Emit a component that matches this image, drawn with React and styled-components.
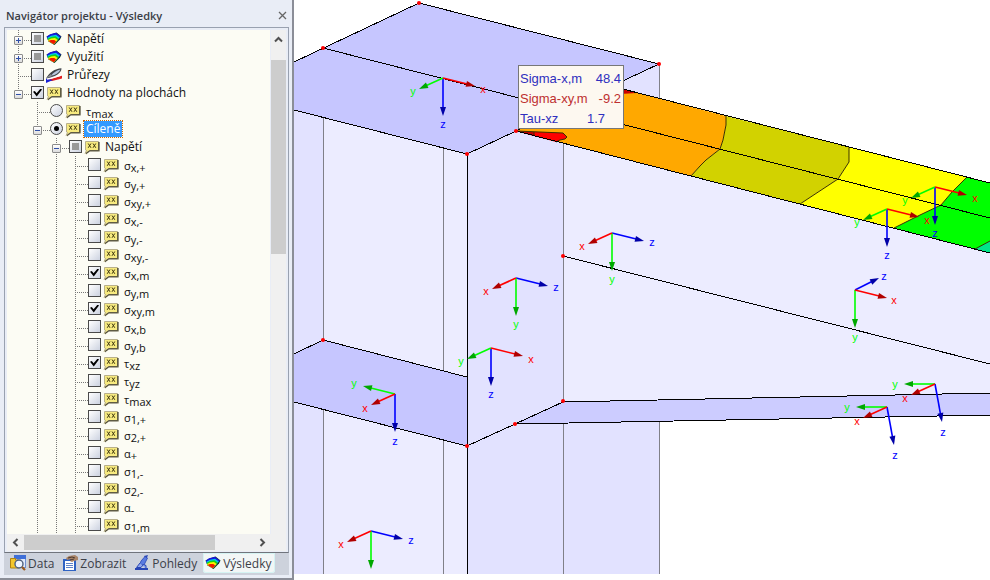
import React, { useState } from "react";
import styled, { createGlobalStyle } from "styled-components";

const STRESSES = [
  ["σ", "x,+"],
  ["σ", "y,+"],
  ["σ", "xy,+"],
  ["σ", "x,-"],
  ["σ", "y,-"],
  ["σ", "xy,-"],
  ["σ", "x,m", true],
  ["σ", "y,m"],
  ["σ", "xy,m", true],
  ["σ", "x,b"],
  ["σ", "y,b"],
  ["τ", "xz", true],
  ["τ", "yz"],
  ["τ", "max"],
  ["σ", "1,+"],
  ["σ", "2,+"],
  ["α", "+"],
  ["σ", "1,-"],
  ["σ", "2,-"],
  ["α", "-"],
  ["σ", "1,m"],
];

// guides: one letter per level, n = nothing, v = line, t = branch, l = last branch
const ROWS = [
  { id: "napeti", guides: "t", toggle: "+", mixed: true, icon: "fan", text: "Napětí" },
  { id: "vyuziti", guides: "t", toggle: "+", mixed: true, icon: "fan", text: "Využití" },
  { id: "prurezy", guides: "t", icon: "section", text: "Průřezy" },
  { id: "hodnoty", guides: "l", toggle: "-", on: true, icon: "note", text: "Hodnoty na plochách" },
  { id: "tmax", guides: "nt", radio: true, icon: "note", text: "τ", sub: "max" },
  { id: "cilene", guides: "nt", toggle: "-", radio: true, on: true, icon: "note", text: "Cíleně", selected: true },
  { id: "napeti2", guides: "nvt", toggle: "-", mixed: true, icon: "note", text: "Napětí" },
  ...STRESSES.map(([text, sub, on], i) => ({
    id: "s" + i,
    guides: "nvvt",
    icon: "note",
    text,
    sub,
    on,
  })),
];

const Note = () => (
  <svg width="16" height="16" viewBox="0 0 16 16">
    <path d="M2.5 3H15.800V12.500H6L2 15.500Z" fill="#8a8672" />
    <path d="M1.500 2.500h13v9h-9L1 14.500 2.500 11.500 1.500 11Z" fill="#f7ea80" stroke="#b9b08a" />
    <path d="M14.700 3v8.700H5.800L2 14.500" fill="none" stroke="#4b4833" />
    <path d="M4.200 4.500 7 8.800M7 4.500 4.200 8.800M9 4.500 11.800 8.800M11.800 4.500 9 8.800" stroke="#40390f" />
  </svg>
);

const Fan = () => (
  <svg width="16" height="16" viewBox="0 0 16 16">
    <path d="M.5 5.500 6 3 10.500 1.500 15.500 5.500 14 8.500 8.500 14 2.500 10.500Z" fill="#0a3a18" />
    <path d="M.8 5.500 4 3.300 10 1.800 15 5.400 7.800 13.200 2.500 10Z" fill="#1616d8" />
    <path d="M1.300 6.700 5 4.700 10 3.700 13.800 6.500 7.800 13.200 2.500 10Z" fill="#00c8f0" />
    <path d="M1.700 7.700 5 6 9.500 5.300 12.800 7.700 7.800 13.200 2.500 10Z" fill="#16d216" />
    <path d="M2.100 8.900 5 7.500 9 7 11.600 9 7.800 13.200 2.500 10.300Z" fill="#fff000" />
    <path d="M2.400 10 5 9.100 8.300 8.900 10.200 10.400 7.800 13.200Z" fill="#f01800" />
  </svg>
);

const Section = () => (
  <svg width="16" height="16" viewBox="0 0 16 16">
    <path d="M1 14 3 12.400 16 8.500V11.500L6 14Z" fill="#e01f1f" />
    <path d="M0 11.500V16L7 13Z" fill="#1a22d6" />
    <path d="M1 12 8 10.300 15.500 8" stroke="#fff" strokeWidth="1.400" />
    <path d="M0 11.600C3 5.500 9 1.500 15.500 1.200 15.500 6 10 9.600 0 11.600Z" fill="#3e4247" />
    <path d="M5 8.800C7 5.400 11 3 14.500 2.400 13 5.600 10 8 5 8.800Z" fill="#b7c6dc" />
    <path d="M0 11.200 5 7 6 9.200Z" fill="#8d9298" />
  </svg>
);

const DataIcon = () => (
  <svg width="16" height="16" viewBox="0 0 16 16">
    <rect x="4.500" y="1.500" width="11" height="11" fill="#dfe9fb" stroke="#6d8fd0" />
    <rect x="4" y="0" width="12" height="4" fill="#3f6fd8" />
    <path d="M.5 3.500h5v1.500h3V13h-8Z" fill="#f3c62c" stroke="#b08312" />
    <circle cx="9" cy="9" r="4" fill="#eef5ff" stroke="#4e5f7e" strokeWidth="1.400" />
    <path d="M12 12 15 15" stroke="#9a5b22" strokeWidth="2.200" />
  </svg>
);

const DisplayIcon = () => (
  <svg width="16" height="16" viewBox="0 0 16 16">
    <rect x="1" y="4" width="13" height="12" fill="#2f63c4" />
    <rect x="3" y="6" width="9" height="9" fill="#fff" />
    <path d="M4 8.500h7M4 10.500h7M4 12.500h7" stroke="#5f83c8" />
    <path d="M4 3 7 1l6-1 3 2v3l-4 1-2 1-2-1 1-2-4 1Z" fill="#a98468" />
    <path d="M6 3 10 2l3 1M8 5l4-1" stroke="#4d3b30" fill="none" />
  </svg>
);

const ViewsIcon = () => (
  <svg width="16" height="16" viewBox="0 0 16 16">
    <path d="M10 1 14 0 12 5Z" fill="#2745b5" />
    <path d="M7 6 11 1.500 13.500 3 10 10 6 9Z" fill="#5a7be0" stroke="#2745b5" strokeWidth=".8" />
    <path d="M6 8 2.500 12.500H7L9.500 9.500 12 10.500V14" fill="#8fa6ee" stroke="#2745b5" />
    <path d="M1 14h13" stroke="#2745b5" strokeWidth="2" />
  </svg>
);

const ICONS = { note: Note, fan: Fan, section: Section };

const TABS = [
  { name: "Data", Icon: DataIcon },
  { name: "Zobrazit", Icon: DisplayIcon },
  { name: "Pohledy", Icon: ViewsIcon },
  { name: "Výsledky", Icon: Fan },
];

const AXIS_COLORS = {
  x: ["#ff0000", "#b00000"],
  y: ["#00ff00", "#00a800"],
  z: ["#0000ff", "#0000a8"],
};

// each axis: tip dx, dy, then label dx, dy
const TRIADS = {
  a: { x: [32, 8, 40, 12], y: [-24, 11, -30, 14], z: [0, 38, 0, 47] },
  b: { x: [-24, 11, -30, 14], y: [0, 38, 0, 47], z: [32, 8, 40, 10] },
  c: { y: [-32, -8, -41, -10], x: [-24, 11, -30, 15], z: [0, 38, 0, 48] },
  d: { z: [24, -12, 29, -13], x: [32, 8, 39, 11], y: [0, 38, 0, 48] },
  e: { y: [-31, 0, -40, 1], x: [-24, 11, -30, 15], z: [7, 38, 8, 49] },
};

// kind, origin, and an axis whose name falls below the scene
const MARKS = [
  ["a", 443, 78],
  ["a", 935, 187],
  ["a", 887, 209],
  ["a", 491, 348],
  ["b", 612, 233],
  ["b", 516, 278],
  ["b", 371, 531, "y"],
  ["c", 395, 394],
  ["d", 855, 290],
  ["e", 935, 384],
  ["e", 887, 407],
];

const NODES = [
  [419, 3],
  [323, 48],
  [659, 64],
  [516, 131],
  [467, 154],
  [563, 256],
  [323, 340],
  [563, 401],
  [515, 424],
  [467, 446],
];

function Axis({ x, y, name, to, unnamed }) {
  const [dx, dy, lx, ly] = to;
  const [line, head] = AXIS_COLORS[name];
  const angle = (Math.atan2(dy, dx) * 180) / Math.PI;
  return (
    <g>
      <line x1={x} y1={y} x2={x + dx * 0.85} y2={y + dy * 0.85} stroke={line} strokeWidth="1.6" />
      <path d="M0 0-9 3-9-3Z" fill={head} transform={`translate(${x + dx} ${y + dy}) rotate(${angle})`} />
      {!unnamed && (
        <AxisName x={x + lx} y={y + ly + 3} fill={line}>
          {name}
        </AxisName>
      )}
    </g>
  );
}

function Model() {
  return (
    <Scene viewBox="294 0 696 574" role="img" aria-label="Model">
      <g shapeRendering="crispEdges">
        <path d="M294 100H323V574H294Z" fill="#e2e2ff" />
        <path d="M323 100H467V574H323Z" fill="#ececff" />
        <path d="M467 154 516 131 563 143V402L516 424 563 423 659 421V574H467Z" fill="#e2e2ff" />
        <path d="M611 86 659 64V98Z" fill="#e2e2ff" />
        <path d="M563 143 990 253V393L563 402Z" fill="#ececff" />
        <path d="M294 62 419 3 659 64 467 154 294 110Z" fill="#c6c6ff" />
        <path d="M294 354 323 340 467 377V446L294 402Z" fill="#c6c6ff" />
        <path d="M516 424 563 402 990 393V415Z" fill="#ccccff" />
      </g>
      <g>
        <path d="M516 131 611 86 726 116V125L723 140 720 149 706 160 700 166 691 176Z" fill="#ffa800" />
        <path d="M726 116 849 147V162L838 179 800 204 691 176 700 166 706 160 720 149 723 140 726 125Z" fill="#d2d200" />
        <path d="M849 147 967 177 952 192 941 205 920 215 894 228 800 204 838 179 849 162Z" fill="#ffff00" />
        <path d="M967 177 990 183V253L894 228 920 215 941 205 952 192Z" fill="#00ff00" />
        <path d="M975 249 990 241V253Z" fill="#00e68a" />
        <path d="M611 86 637 93 620 94Z" fill="#c80000" />
        <path d="M516 131 563 133 567 137 565 139 560 140 556 142Z" fill="#ff0000" />
        <path d="M516 131 534 132V136Z" fill="#c00000" />
      </g>
      <Contour d="M726 116V125L723 140 720 149 706 160 700 166 691 176" />
      <Contour d="M849 147V162L838 179 800 204" />
      <Contour d="M967 177 952 192 941 205 920 215 894 228" />
      <Contour d="M990 241 975 249M516 131 563 133 567 137 565 139 560 140 556 142M534 132V136" />
      <g shapeRendering="crispEdges">
        <Thin d="M323.500 118V340M323.500 410V574M443.500 148V371M443.500 441V574" />
        <Thin d="M563.500 143V402M563.500 423V574M659.500 64V98M659.500 421V574" />
        <Edge d="M294 62 419 3 659 64 467 154 294 110M323 48 990 218" />
        <Edge d="M467.500 154V574M294 354 323 340 467 377M294 402 467 446 563 402" />
        <Edge d="M563 256 990 364M563 402 990 393M516 424 990 415" />
        <Edge d="M611 86 990 183M516 131 990 253" />
      </g>
      {NODES.map(([x, y]) => (
        <circle key={`${x}-${y}`} cx={x} cy={y} r="2" fill="#ff0000" />
      ))}
      {MARKS.map(([kind, x, y, hidden]) => (
        <g key={`${x}-${y}`}>
          {["z", "y", "x"].map((name) => (
            <Axis key={name} x={x} y={y} name={name} to={TRIADS[kind][name]} unnamed={name === hidden} />
          ))}
        </g>
      ))}
      <rect x="518.500" y="65.500" width="105" height="63" fill="#fdf8f0" stroke="#777" />
      <Value x="520" y="83" fill="#2f2fbe">Sigma-x,m</Value>
      <Value x="621" y="83" fill="#2f2fbe" textAnchor="end">48.4</Value>
      <Value x="520" y="103" fill="#be2f2f">Sigma-xy,m</Value>
      <Value x="621" y="103" fill="#be2f2f" textAnchor="end">-9.2</Value>
      <Value x="520" y="123" fill="#2f2fbe">Tau-xz</Value>
      <Value x="605" y="123" fill="#2f2fbe" textAnchor="end">1.7</Value>
    </Scene>
  );
}

function TreeRow({ row }) {
  const [on, setOn] = useState(!!row.on);
  const Icon = ICONS[row.icon];
  return (
    <Row>
      {row.guides.split("").map((kind, i) => (
        <Guide key={i} $kind={kind}>
          {row.toggle && i === row.guides.length - 1 && (
            <Toggle aria-label={row.toggle === "+" ? "Rozbalit" : "Sbalit"} $plus={row.toggle === "+"} />
          )}
        </Guide>
      ))}
      {row.radio ? (
        <Radio id={row.id} name="values" defaultChecked={row.on} />
      ) : (
        <Check id={row.id} $mixed={row.mixed} checked={on} onChange={() => setOn(!on)} />
      )}
      <Icon />
      <RowLabel htmlFor={row.id} $selected={row.selected} $symbol={!!row.sub}>
        {row.text}
        {row.sub && <Sub>{row.sub}</Sub>}
      </RowLabel>
    </Row>
  );
}

const App = () => (
  <>
    <GlobalStyle />
    <Page>
      <Navigator>
        <TitleBar>
          <Title>Navigátor projektu - Výsledky</Title>
          <CloseButton aria-label="Zavřít">
            <svg width="9" height="9" viewBox="0 0 9 9">
              <path d="M1 1 8 8M8 1 1 8" stroke="#666" strokeWidth="1.3" />
            </svg>
          </CloseButton>
        </TitleBar>
        <Frame>
          <Tree>
            {ROWS.map((row) => (
              <TreeRow key={row.id} row={row} />
            ))}
          </Tree>
          <VerticalBar>
            <ArrowButton aria-label="Nahoru" $tall>
              <svg width="9" height="7" viewBox="0 0 9 7">
                <path d="M1 5.500 4.500 2 8 5.500" fill="none" stroke="#505050" strokeWidth="2" />
              </svg>
            </ArrowButton>
            <VerticalThumb />
          </VerticalBar>
          <HorizontalBar>
            <ArrowButton aria-label="Vlevo">
              <svg width="7" height="9" viewBox="0 0 7 9">
                <path d="M5.500 1 2 4.500 5.500 8" fill="none" stroke="#505050" strokeWidth="2" />
              </svg>
            </ArrowButton>
            <HorizontalTrack>
              <HorizontalThumb />
            </HorizontalTrack>
            <ArrowButton aria-label="Vpravo">
              <svg width="7" height="9" viewBox="0 0 7 9">
                <path d="M1.500 1 5 4.500 1.500 8" fill="none" stroke="#505050" strokeWidth="2" />
              </svg>
            </ArrowButton>
          </HorizontalBar>
        </Frame>
        <Tabs>
          {TABS.map(({ name, Icon }) => (
            <Tab key={name} $active={name === "Výsledky"}>
              <Icon />
              {name}
            </Tab>
          ))}
        </Tabs>
      </Navigator>
      <Viewport>
        <Model />
      </Viewport>
    </Page>
  </>
);

const GlobalStyle = createGlobalStyle`
  body {
    margin: 0;
    background: #fff;
    font-family: "Open Sans", "Noto Sans", sans-serif;
    font-size: 12px;
    color: #111;
  }
  * {
    box-sizing: border-box;
  }
  button {
    font: inherit;
    padding: 0;
    border: 0;
    background: none;
  }
  svg {
    flex: none;
    display: block;
  }
`;

const Page = styled.div`
  display: flex;
  align-items: flex-start;
`;

const Navigator = styled.aside`
  flex: none;
  width: 294px;
  padding: 4px 3px 3px 4px;
  background: #e9edf6;
  border-right: 2px solid #8b8e98;
  border-bottom: 2px solid #8b8e98;
`;

const TitleBar = styled.header`
  display: flex;
  align-items: center;
  justify-content: space-between;
  height: 23px;
  padding: 0 2px;
`;

const Title = styled.h1`
  margin: 0;
  font-size: 11px;
  font-weight: 600;
  color: #3a3e46;
`;

const CloseButton = styled.button`
  padding: 0;
`;

const Frame = styled.div`
  display: grid;
  grid-template-columns: 1fr 18px;
  padding: 2px 0 1px 2px;
  border: 1px solid #99a1b0;
  border-bottom-color: #70747c;
`;

const Tree = styled.div`
  padding-left: 2px;
  background: #fcfcf4;
`;

const Row = styled.div`
  display: flex;
  align-items: center;
  height: 18px;
  padding-bottom: 1px;

  > svg {
    margin-top: 1px;
  }
`;

const dotsDown = "repeating-linear-gradient(#777 0 1px, transparent 1px 2px)";
const dotsAcross = "repeating-linear-gradient(90deg, #777 0 1px, transparent 1px 2px)";

const Guide = styled.span`
  display: flex;
  align-items: center;
  align-self: stretch;
  width: 19px;
  padding: 4px 0 0 5px;
  background-repeat: no-repeat;
  background-image: ${({ $kind }) =>
    $kind === "n" ? "none" : $kind === "v" ? dotsDown : `${dotsDown}, ${dotsAcross}`};
  background-position: 9px 0, 9px 10px;
  background-size: 1px ${({ $kind }) => ($kind === "l" ? "10px" : "100%")}, 100% 1px;

  &:last-of-type {
    width: 22px;
  }
`;

const Toggle = styled.button`
  width: 9px;
  height: 9px;
  border: 1px solid #8c8c8c;
  border-radius: 1px;
  background:
    linear-gradient(#3050a8, #3050a8) center / 5px 1px no-repeat,
    linear-gradient(#3050a8, #3050a8) center / 1px ${({ $plus }) => ($plus ? "5px" : "0")} no-repeat,
    linear-gradient(#fff, #dcdcdc);
`;

const Check = styled.input.attrs({ type: "checkbox" })`
  appearance: none;
  flex: none;
  display: grid;
  place-items: center;
  width: 13px;
  height: 13px;
  margin: 0 2px 0 0;
  border: 1px solid #4a4a4a;
  background: ${({ $mixed }) => ($mixed ? "linear-gradient(#999, #999) center / 7px 7px no-repeat," : "")}
    linear-gradient(135deg, #fff, #ccd2e0);

  &:checked::before {
    content: "";
    width: 9px;
    height: 8px;
    background: #000;
    clip-path: polygon(0 40%, 20% 30%, 40% 60%, 85% 0, 100% 12%, 42% 100%);
  }
`;

const Radio = styled(Check).attrs({ type: "radio" })`
  border-radius: 50%;

  &:checked::before {
    width: 5px;
    height: 5px;
    border-radius: 50%;
    clip-path: none;
  }
`;

const RowLabel = styled.label`
  margin-left: 3px;
  padding: ${({ $symbol }) => ($symbol ? "2px 2px 0" : "0 2px")};
  font-size: ${({ $symbol }) => ($symbol ? "11px" : "12px")};
  line-height: ${({ $symbol }) => ($symbol ? "14px" : "16px")};
  white-space: nowrap;
  ${({ $selected }) =>
    $selected && "background: #3399ff; color: #fff; outline: 1px dotted #cc6600;"}
`;

const Sub = styled.sub`
  vertical-align: -2px;
  font-size: 11px;
  line-height: 1px;
`;

const VerticalBar = styled.div`
  display: flex;
  flex-direction: column;
  margin-left: 1px;
  margin-right: 2px;
  background: #f0f0f0;
`;

const VerticalThumb = styled.div`
  height: 194px;
  background: #cdcdcd;
`;

const HorizontalBar = styled.div`
  grid-column: 1 / -1;
  display: flex;
  height: 17px;
  margin-right: 2px;
  padding: 1px 15px 1px 0;
  background: #f0f0f0;
`;

const HorizontalTrack = styled.div`
  flex: 1;
`;

const HorizontalThumb = styled.div`
  width: 83%;
  height: 100%;
  background: #cdcdcd;
`;

const ArrowButton = styled.button`
  display: grid;
  place-items: center;
  width: ${({ $tall }) => ($tall ? "15px" : "17px")};
  height: ${({ $tall }) => ($tall ? "30px" : "100%")};
  padding-bottom: ${({ $tall }) => ($tall ? "12px" : "0")};
`;

const Tabs = styled.nav`
  display: flex;
  align-items: flex-start;
  gap: 3px;
  height: 22px;
  padding: 0 4px;
  background: #cdd2dc;
`;

const Tab = styled.button`
  display: flex;
  align-items: center;
  gap: 2px;
  height: 20px;
  padding: 0 3px 0 2px;
  border-radius: 0 0 3px 3px;
  color: #3c4048;
  ${({ $active }) => $active && "background: #f2f6f6; box-shadow: inset 0 0 0 1px #d5f3f3;"}
`;

const Viewport = styled.main`
  flex: 1;
  min-width: 0;
  background: #fff;
`;

const Scene = styled.svg`
  width: 100%;
  height: auto;
`;

const Edge = styled.path`
  fill: none;
  stroke: #000;
`;

const Thin = styled(Edge)`
  stroke: #808088;
`;

const Contour = styled(Edge)`
  stroke: #3a3000;
`;

const AxisName = styled.text`
  font: 11px "Liberation Sans", sans-serif;
  text-anchor: middle;
`;

const Value = styled.text`
  font: 13px "Liberation Sans", sans-serif;
`;

export default App;
